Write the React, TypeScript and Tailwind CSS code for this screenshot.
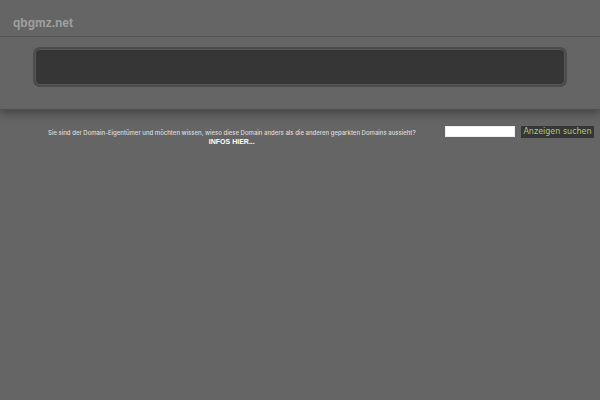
function SearchForm() {
  return (
    <form className="flex shrink-0 items-start gap-1.5" onSubmit={(e) => e.preventDefault()}>
      <input
        type="text"
        name="q"
        aria-label="Suchbegriff"
        className="h-[11px] w-[70px] border border-[#eeeeee] bg-white px-0.5 text-[8px] text-[#333333] outline-none"
      />
      <button
        type="submit"
        className="h-3 w-[73px] whitespace-nowrap bg-[#363636] text-center font-['DejaVu_Sans',sans-serif] text-[8px] leading-3 text-[#b4cb70]"
      >
        Anzeigen suchen
      </button>
    </form>
  )
}

export default function App() {
  return (
    <div className="min-h-screen bg-[#656565] font-['Liberation_Sans',Arial,sans-serif]">
      <header className="border-b border-[#505050] shadow-[0_4px_8px_#464646]">
        <div className="border-b border-[#525252] px-[13px] pt-4 pb-1.5">
          <h1 className="text-[12px] leading-[14px] font-bold text-[#a0a0a0]">qbgmz.net</h1>
        </div>

        <div className="px-[33px] pt-2.5 pb-[22px]">
          <div className="rounded-[7px] border-2 border-[#4b4b4b] bg-[#484848]">
            <div className="h-9 rounded-[5px] border border-[#575757] bg-[#363636]" />
          </div>
        </div>
      </header>

      <main className="flex items-start justify-between pt-4 pr-1.5 pl-12">
        <div className="pt-0.5 text-center leading-[9px] whitespace-nowrap">
          <p className="font-['Inter',sans-serif] text-[6px] font-medium text-[#dddddd]">
            Sie sind der Domain-Eigentümer und möchten wissen, wieso diese Domain anders als die anderen geparkten Domains aussieht?
          </p>
          <p className="text-[7px]">
            <a href="#infos" className="font-bold text-white">INFOS HIER...</a>
          </p>
        </div>
        <SearchForm />
      </main>
    </div>
  )
}
